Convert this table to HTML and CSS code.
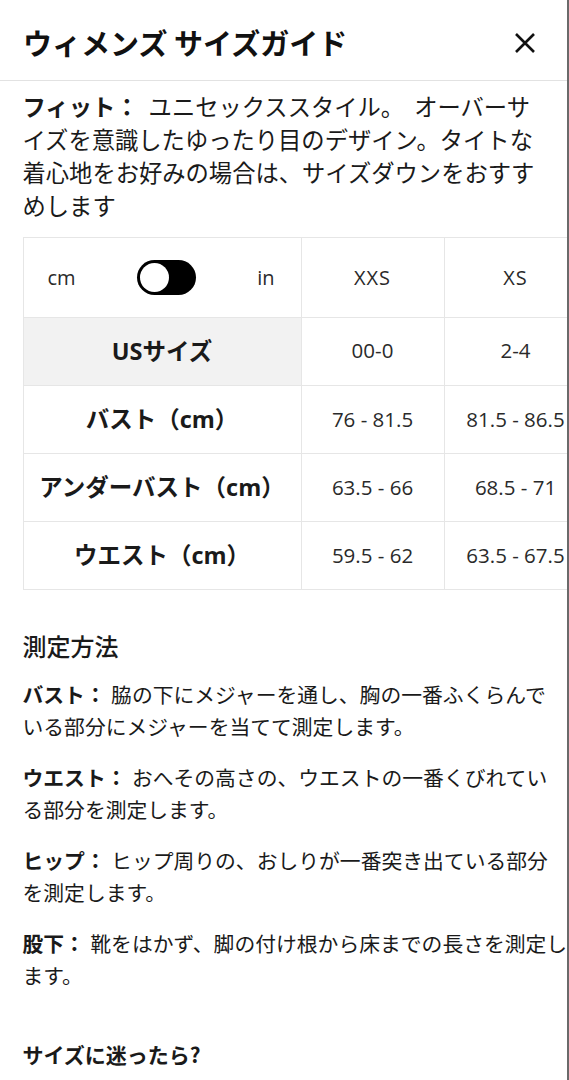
FILE: index.html
```html
<!DOCTYPE html>
<html lang="ja">
<head>
<meta charset="utf-8">
<title>ウィメンズ サイズガイド</title>
<link rel="stylesheet" href="styles.css">
</head>
<body>
<div class="page">
  <header class="modal-header">
    <h1 class="modal-title">ウィメンズ サイズガイド</h1>
    <button class="close-btn" aria-label="閉じる">
      <svg width="22" height="22" viewBox="0 0 22 22" aria-hidden="true">
        <path d="M2 2 L20 20 M20 2 L2 20" stroke="#111" stroke-width="2.6" stroke-linecap="butt" fill="none"/>
      </svg>
    </button>
  </header>

  <main class="content">
    <p class="fit"><strong>フィット：</strong> ユニセックススタイル。 オーバーサイズを意識したゆったり目のデザイン。タイトな着心地をお好みの場合は、サイズダウンをおすすめします</p>

    <div class="table-wrap">
      <table class="size-table">
        <tr class="head-row">
          <td class="label-cell">
            <div class="unit-switch">
              <span class="unit">cm</span>
              <span class="toggle"><span class="knob"></span></span>
              <span class="unit">in</span>
            </div>
          </td>
          <td class="val head">XXS</td>
          <td class="val head">XS</td>
        </tr>
        <tr class="us-row">
          <th class="label-cell us">USサイズ</th>
          <td class="val">00-0</td>
          <td class="val">2-4</td>
        </tr>
        <tr>
          <th class="label-cell">バスト（cm）</th>
          <td class="val">76 - 81.5</td>
          <td class="val">81.5 - 86.5</td>
        </tr>
        <tr>
          <th class="label-cell">アンダーバスト（cm）</th>
          <td class="val">63.5 - 66</td>
          <td class="val">68.5 - 71</td>
        </tr>
        <tr>
          <th class="label-cell">ウエスト（cm）</th>
          <td class="val">59.5 - 62</td>
          <td class="val">63.5 - 67.5</td>
        </tr>
      </table>
    </div>

    <section class="howto">
      <h2 class="howto-title">測定方法</h2>
      <p class="step"><strong>バスト：</strong> 脇の下にメジャーを通し、胸の一番ふくらんで<br>いる部分にメジャーを当てて測定します。</p>
      <p class="step"><strong>ウエスト：</strong> おへその高さの、ウエストの一番くびれてい<br>る部分を測定します。</p>
      <p class="step"><strong>ヒップ：</strong> ヒップ周りの、おしりが一番突き出ている部分<br>を測定します。</p>
      <p class="step"><strong>股下：</strong> 靴をはかず、脚の付け根から床までの長さを測定し<br>ます。</p>
      <h3 class="help-title">サイズに迷ったら?</h3>
    </section>
  </main>
</div>
</body>
</html>
```

FILE: styles.css
```css
* {
  box-sizing: border-box;
}

html, body {
  margin: 0;
  padding: 0;
  background: #fff;
}

body {
  font-family: "Open Sans", "Noto Sans CJK JP", sans-serif;
  color: #1a1a1a;
}

.page {
  width: 569px;
  min-height: 1080px;
  border-right: 2px solid #6a6a6a;
  overflow: hidden;
}

.modal-header {
  height: 81px;
  display: flex;
  align-items: center;
  justify-content: space-between;
  padding: 0 31px 0 23px;
  border-bottom: 1px solid #e2e2e2;
}

.modal-title {
  margin: 0;
  font-family: "Noto Sans CJK JP", sans-serif;
  font-size: 29px;
  font-weight: 700;
  color: #111;
  line-height: 1;
  padding-top: 4px;
}

.close-btn {
  border: 0;
  background: none;
  padding: 0;
  width: 22px;
  height: 22px;
  display: flex;
  align-items: center;
  justify-content: center;
  margin-top: 6px;
}

.content {
  padding: 10px 0 0 22.5px;
}

.fit {
  margin: 0 22.5px 0 0;
  font-size: 23.3px;
  line-height: 33px;
  word-spacing: 4px;
}

.fit strong,
.step strong {
  font-weight: 700;
}

.table-wrap {
  margin-top: 14px;
  overflow: hidden;
}

.size-table {
  border-collapse: collapse;
  table-layout: fixed;
  width: 564px;
}

.size-table td,
.size-table th {
  border: 1px solid #e6e6e6;
  text-align: center;
  vertical-align: middle;
  padding: 0;
  height: 68px;
}

.size-table th {
  padding-bottom: 3px;
}

.size-table .val {
  padding-bottom: 2px;
}

.size-table .head-row td {
  height: 79.5px;
  padding-bottom: 0;
}

.size-table .us-row th,
.size-table .us-row td {
  height: 68.5px;
}

.label-cell {
  width: 278px;
  font-size: 23.5px;
  font-weight: 700;
  color: #1a1a1a;
}

.label-cell.us {
  background: #f2f2f2;
}

.val {
  width: 143px;
  font-size: 20.5px;
  color: #2a2a2a;
}

.val.head {
  font-size: 20px;
  letter-spacing: 1px;
}

.unit-switch {
  display: flex;
  align-items: center;
  justify-content: space-between;
  padding: 0 26px 0 24px;
  font-weight: 400;
}

.unit {
  font-size: 20px;
  color: #2a2a2a;
}

.toggle {
  width: 59px;
  height: 35px;
  border-radius: 18px;
  background: #000;
  display: flex;
  align-items: center;
  padding: 0 3px;
}

.knob {
  width: 29px;
  height: 29px;
  border-radius: 50%;
  background: #fff;
}

.howto {
  padding-top: 40px;
  margin-right: -12px;
}

.howto-title {
  margin: 0 0 17px;
  font-family: "Noto Sans CJK JP", sans-serif;
  font-size: 24px;
  font-weight: 500;
  line-height: 32px;
}

.step {
  margin: 0 0 19px;
  font-size: 20.8px;
  line-height: 32px;
}

.help-title {
  margin: 46px 0 0;
  font-size: 21px;
  font-weight: 700;
  line-height: 32px;
  font-family: "Noto Sans CJK JP", sans-serif;
}
```
